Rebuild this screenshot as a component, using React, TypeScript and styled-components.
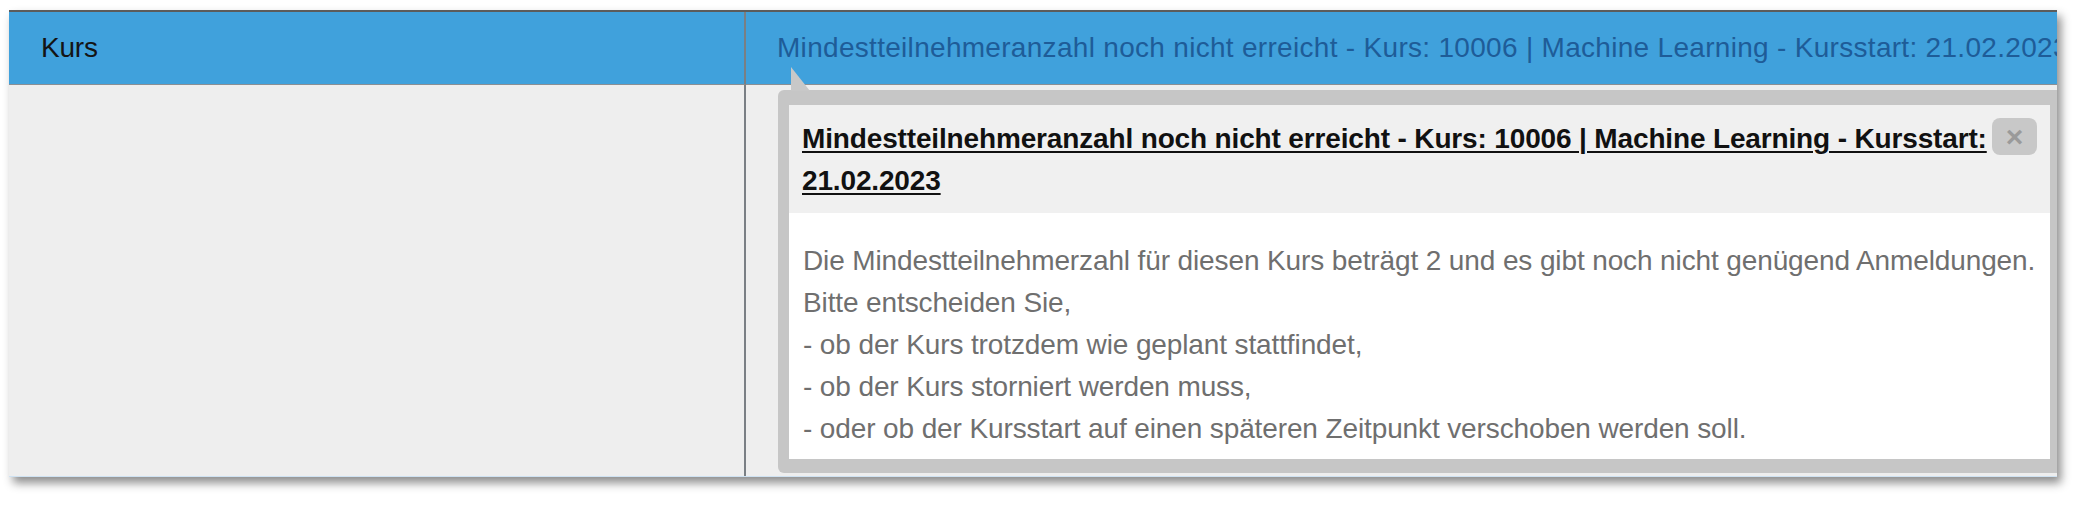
import React from "react";
import styled, { createGlobalStyle } from "styled-components";

const Global = createGlobalStyle`
  html, body {
    margin: 0;
    padding: 0;
    background: #ffffff;
  }
  body {
    font-family: "Liberation Sans", Arial, Helvetica, sans-serif;
  }
`;

const Page = styled.div`
  box-sizing: border-box;
  width: 2090px;
  height: 513px;
  padding: 10px 0 0 9px;
`;

const Sheet = styled.div`
  position: relative;
  box-sizing: border-box;
  width: 2048px;
  height: 467px;
  overflow: hidden;
  display: grid;
  grid-template-columns: 737px 1fr;
  grid-template-rows: 73px 1fr;
  background: #eeeeee;
  border-top: 2px solid #5c5c5c;
  border-bottom: 1px solid #cfe2f2;
  box-shadow: 4px 6px 9px rgba(0, 0, 0, 0.45);
`;

const HeadCell = styled.div<{ $first?: boolean; $value?: boolean }>`
  display: flex;
  align-items: center;
  box-sizing: border-box;
  min-width: 0;
  background: #40a1dc;
  border-bottom: 1px solid #8a8f94;
  border-right: ${(p) => (p.$first ? "2px solid #7a7f84" : "none")};
  padding-left: ${(p) => (p.$first ? "32px" : "31px")};
  font-size: 28px;
  color: ${(p) => (p.$value ? "#1e5c98" : "#141414")};
  white-space: nowrap;
  overflow: hidden;
  letter-spacing: ${(p) => (p.$value ? "0.3px" : "-0.2px")};
`;

const BodyCell = styled.div<{ $first?: boolean }>`
  background: #eeeeee;
  border-right: ${(p) => (p.$first ? "2px solid #7a7f84" : "none")};
`;

const Popover = styled.div`
  position: absolute;
  left: 769px;
  top: 78px;
  width: 1284px;
  box-sizing: border-box;
  padding: 15px 12px 14px 11px;
  background: #c6c6c6;
  border-radius: 6px;
`;

const Pointer = styled.svg`
  position: absolute;
  left: 13px;
  top: -23px;
  display: block;
`;

const PopHead = styled.div`
  display: flex;
  align-items: flex-start;
  background: #f0f0f0;
  padding: 13px 13px 11px 13px;
`;

const PopTitle = styled.div`
  flex: 1;
  min-width: 0;
  font-size: 28px;
  line-height: 42px;
  font-weight: 700;
  color: #111111;
  text-decoration: underline;
  text-decoration-thickness: 2px;
  text-underline-offset: 3px;
  letter-spacing: -0.15px;
`;

const CloseButton = styled.button`
  flex: none;
  width: 45px;
  height: 37px;
  margin: 0;
  padding: 0;
  border: none;
  border-radius: 8px;
  background: #c8c8c8;
  color: #9a9a9a;
  font-family: "Liberation Sans", Arial, sans-serif;
  font-size: 30px;
  font-weight: 700;
  line-height: 37px;
  text-align: center;
  cursor: pointer;
`;

const PopBody = styled.div`
  background: #ffffff;
  padding: 27px 13px 9px 14px;
`;

const Line = styled.div`
  font-size: 28px;
  line-height: 42px;
  color: #6f6f6f;
  white-space: nowrap;
  letter-spacing: -0.12px;
`;

const headline =
  "Mindestteilnehmeranzahl noch nicht erreicht - Kurs: 10006 | Machine Learning - Kursstart: 21.02.2023";

const lines = [
  "Die Mindestteilnehmerzahl für diesen Kurs beträgt 2 und es gibt noch nicht genügend Anmeldungen.",
  "Bitte entscheiden Sie,",
  "- ob der Kurs trotzdem wie geplant stattfindet,",
  "- ob der Kurs storniert werden muss,",
  "- oder ob der Kursstart auf einen späteren Zeitpunkt verschoben werden soll.",
];

export default function App() {
  return (
    <>
      <Global />
      <Page>
        <Sheet>
          <HeadCell $first>Kurs</HeadCell>
          <HeadCell $value>{headline}</HeadCell>
          <BodyCell $first />
          <BodyCell />
          <Popover>
            <Pointer width="19" height="24" viewBox="0 0 19 24">
              <polygon points="0,0 0,24 19,24" fill="#c8c8c8" />
            </Pointer>
            <PopHead>
              <PopTitle>{headline}</PopTitle>
              <CloseButton aria-label="Schließen">×</CloseButton>
            </PopHead>
            <PopBody>
              {lines.map((t) => (
                <Line key={t}>{t}</Line>
              ))}
            </PopBody>
          </Popover>
        </Sheet>
      </Page>
    </>
  );
}
